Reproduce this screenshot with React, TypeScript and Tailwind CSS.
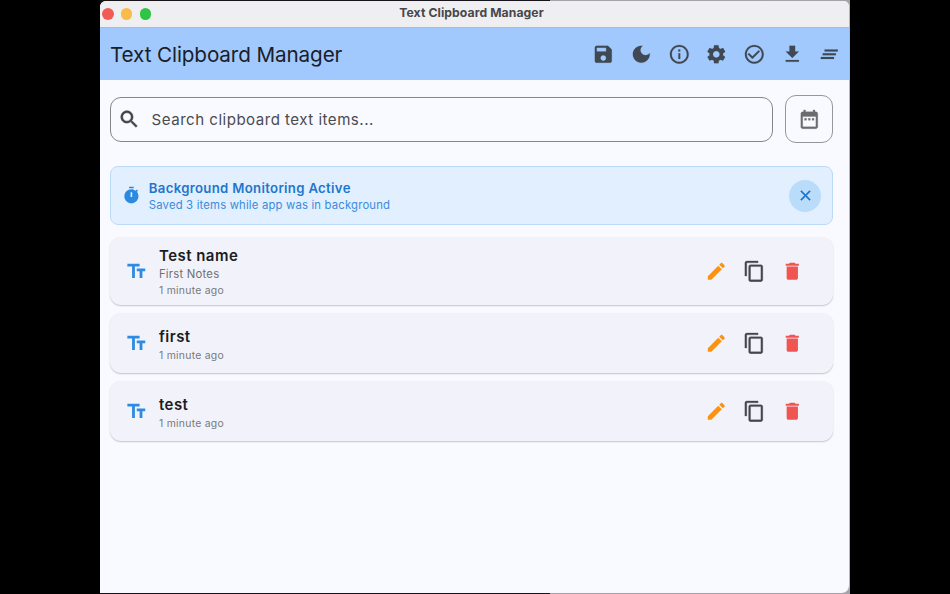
const ICONS = {
  save: "M17 3H5c-1.11 0-2 .9-2 2v14c0 1.1.89 2 2 2h14c1.1 0 2-.9 2-2V7l-4-4zm-5 16c-1.66 0-3-1.34-3-3s1.34-3 3-3 3 1.34 3 3-1.34 3-3 3zm3-10H5V5h10v4z",
  moon: "M12 3c-4.97 0-9 4.03-9 9s4.03 9 9 9 9-4.03 9-9c0-.46-.04-.92-.1-1.36-.98 1.37-2.58 2.26-4.4 2.26-2.98 0-5.4-2.42-5.4-5.4 0-1.81.89-3.42 2.26-4.4-.44-.06-.9-.1-1.36-.1z",
  info: "M11 7h2v2h-2zm0 4h2v6h-2zm1-9C6.48 2 2 6.48 2 12s4.48 10 10 10 10-4.48 10-10S17.52 2 12 2zm0 18c-4.41 0-8-3.59-8-8s3.59-8 8-8 8 3.59 8 8-3.59 8-8 8z",
  settings:
    "M19.14 12.94c.04-.3.06-.61.06-.94 0-.32-.02-.64-.07-.94l2.03-1.58c.18-.14.23-.41.12-.61l-1.92-3.32c-.12-.22-.37-.29-.59-.22l-2.39.96c-.5-.38-1.03-.7-1.62-.94l-.36-2.54c-.04-.24-.24-.41-.48-.41h-3.84c-.24 0-.43.17-.47.41l-.36 2.54c-.59.24-1.13.57-1.62.94l-2.39-.96c-.22-.08-.47 0-.59.22L2.74 8.87c-.12.21-.08.47.12.61l2.03 1.58c-.05.3-.09.63-.09.94s.02.64.07.94l-2.03 1.58c-.18.14-.23.41-.12.61l1.92 3.32c.12.22.37.29.59.22l2.39-.96c.5.38 1.03.7 1.62.94l.36 2.54c.05.24.24.41.48.41h3.84c.24 0 .44-.17.47-.41l.36-2.54c.59-.24 1.13-.56 1.62-.94l2.39.96c.22.08.47 0 .59-.22l1.92-3.32c.12-.22.07-.47-.12-.61l-2.01-1.58zM12 15.6c-1.98 0-3.6-1.62-3.6-3.6s1.62-3.6 3.6-3.6 3.6 1.62 3.6 3.6-1.62 3.6-3.6 3.6z",
  check: "M16.59 7.58L10 14.17l-3.59-3.58L5 12l5 5 8-8zM12 2C6.48 2 2 6.48 2 12s4.48 10 10 10 10-4.48 10-10S17.52 2 12 2zm0 18c-4.42 0-8-3.58-8-8s3.58-8 8-8 8 3.58 8 8-3.58 8-8 8z",
  download: "M5 20h14v-2H5v2zM19 9h-4V3H9v6H5l7 7 7-7z",
  clearAll: "M5 13h14v-2H5v2zm-2 4h14v-2H3v2zM7 7v2h14V7H7z",
  search:
    "M15.5 14h-.79l-.28-.27C15.41 12.59 16 11.11 16 9.5 16 5.91 13.09 3 9.5 3S3 5.91 3 9.5 5.91 16 9.5 16c1.61 0 3.09-.59 4.23-1.57l.27.28v.79l5 4.99L20.49 19l-4.99-5zm-6 0C7.01 14 5 11.99 5 9.5S7.01 5 9.5 5 14 7.01 14 9.5 11.99 14 9.5 14z",
  calendar:
    "M9 11H7v2h2v-2zm4 0h-2v2h2v-2zm4 0h-2v2h2v-2zm2-7h-1V2h-2v2H8V2H6v2H5c-1.11 0-1.99.9-1.99 2L3 20c0 1.1.89 2 2 2h14c1.1 0 2-.9 2-2V6c0-1.1-.9-2-2-2zm0 16H5V9h14v11z",
  timer:
    "M9 1h6v2H9zM19.03 7.39l1.42-1.42c-.43-.51-.9-.99-1.41-1.41l-1.42 1.42C16.07 4.74 14.12 4 12 4c-4.97 0-9 4.03-9 9s4.02 9 9 9 9-4.03 9-9c0-2.12-.74-4.07-1.97-5.61zM13 14h-2V8h2v6z",
  close: "M19 6.41L17.59 5 12 10.59 6.41 5 5 6.41 10.59 12 5 17.59 6.41 19 12 13.41 17.59 19 19 17.59 13.41 12z",
  text: "M2.5 4v3h5v12h3V7h5V4h-13zm19 5h-9v3h3v7h3v-7h3V9z",
  edit: "M3 17.25V21h3.75L17.81 9.94l-3.75-3.75L3 17.25zM20.71 7.04c.39-.39.39-1.02 0-1.41l-2.34-2.34c-.39-.39-1.02-.39-1.41 0l-1.83 1.83 3.75 3.75 1.83-1.83z",
  copy: "M16 1H4c-1.1 0-2 .9-2 2v14h2V3h12V1zm3 4H8c-1.1 0-2 .9-2 2v14c0 1.1.9 2 2 2h11c1.1 0 2-.9 2-2V7c0-1.1-.9-2-2-2zm0 16H8V7h11v14z",
  trash: "M6 19c0 1.1.9 2 2 2h8c1.1 0 2-.9 2-2V7H6v12zM19 4h-3.5l-1-1h-5l-1 1H5v2h14V4z",
};

type IconName = keyof typeof ICONS;

function Icon({ name, weight = 0, className = "size-[22.6px]" }: { name: IconName; weight?: number; className?: string }) {
  return (
    <svg
      viewBox="0 0 24 24"
      fill="currentColor"
      stroke={weight ? "currentColor" : "none"}
      strokeWidth={weight}
      strokeLinejoin="round"
      className={`shrink-0 ${className}`}
    >
      <path d={ICONS[name]} />
    </svg>
  );
}

const TOOLBAR: IconName[] = ["save", "moon", "info", "settings", "check", "download", "clearAll"];

interface Clip {
  title: string;
  note?: string;
  time: string;
}

const CLIPS: Clip[] = [
  { title: "Test name", note: "First Notes", time: "1 minute ago" },
  { title: "first", time: "1 minute ago" },
  { title: "test", time: "1 minute ago" },
];

function ClipCard({ clip }: { clip: Clip }) {
  return (
    <div
      className={`flex items-center rounded-[11px] bg-[#f2f3fa] pl-[15px] pr-[30px] shadow-[0_1px_1.5px_rgba(0,0,0,0.22)] ${
        clip.note ? "h-[68px]" : "h-[60px]"
      }`}
    >
      <Icon name="text" className="size-[22.6px] text-[#2f8ae0]" />
      <div className={`ml-[11.4px] flex-1 whitespace-nowrap ${clip.note ? "pt-px" : "pt-[3px]"}`}>
        <div className="text-[15px] font-semibold leading-[21px] tracking-[0.46px] text-[#1b1c21]">{clip.title}</div>
        {clip.note && (
          <div className="text-[11.3px] leading-[17px] tracking-[0.22px] text-[#6f7074]">{clip.note}</div>
        )}
        <div
          className={`text-[10.4px] tracking-[0.27px] text-[#77787c] ${clip.note ? "leading-[15px]" : "leading-[17px]"}`}
        >
          {clip.time}
        </div>
      </div>
      <div className="flex items-center gap-[15.1px]">
        <Icon name="edit" className="size-[22.6px] text-[#fb9210]" />
        <Icon name="copy" weight={0.3} className="size-[22.6px] text-[#43464d]" />
        <Icon name="trash" className="size-[22.6px] text-[#f05552]" />
      </div>
    </div>
  );
}

export default function App() {
  return (
    <div className="flex h-[594px] w-[950px] overflow-hidden bg-black font-['Inter','Liberation_Sans',sans-serif]">
      <div className="ml-[99.5px] h-[594px] w-[750px] bg-linear-to-r from-[#17131b] from-60% to-[#a5a3a9] to-60% pt-px">
        <div className="flex h-[592px] flex-col overflow-hidden rounded-t-[6px] rounded-br-[8px] border-r border-[#b5b6bd] bg-[#f9faff]">
          <div className="relative flex h-[27px] shrink-0 items-center border-b border-[#abb8d8] bg-[#efeef0] pl-[2.7px]">
            <div className="flex gap-[7.3px]">
              <span className="size-[11.5px] rounded-full bg-[#f15a55]" />
              <span className="size-[11.5px] rounded-full bg-[#f9bb4a]" />
              <span className="size-[11.5px] rounded-full bg-[#2fc446]" />
            </div>
            <div className="absolute inset-x-0 top-[3px] pr-[5px] text-center text-[12.2px] font-bold leading-[17px] tracking-[0.08px] text-[#48474b]">
              Text Clipboard Manager
            </div>
          </div>

          <header className="flex h-[52px] shrink-0 items-center justify-between bg-[#a1c9fd] pl-[10.5px] pr-[7.5px] text-[#3f4853]">
            <h1 className="whitespace-nowrap pt-px text-[20.7px] leading-[28px] tracking-[-0.12px] text-[#192029]">
              Text Clipboard Manager
            </h1>
            <div className="flex gap-[15.1px]">
              {TOOLBAR.map((name) => (
                <Icon key={name} name={name} weight={0.15} />
              ))}
            </div>
          </header>

          <main className="flex flex-col pl-[10.5px] pr-[15.4px] pt-[15px]">
            <div className="flex items-center gap-[12px]">
              <div className="flex h-[45px] flex-1 items-center rounded-[11px] border border-[#85868b] pl-[6.5px] text-[#414348]">
                <Icon name="search" weight={0.6} />
                <span className="ml-[11.5px] whitespace-nowrap pt-[2px] text-[15.1px] leading-[22px] tracking-[0.48px] text-[#4a4b51]">
                  Search clipboard text items...
                </span>
              </div>
              <button className="flex size-[48px] items-center justify-center rounded-[11px] border border-[#97979b] text-[#6c6c6f]">
                <Icon name="calendar" weight={0.3} />
              </button>
            </div>

            <section className="mt-[23px] flex h-[59px] items-center rounded-[8px] border border-[#b9dbf8] bg-[#e1efff] pl-[11px] pr-[11px]">
              <Icon name="timer" className="size-[18.8px] text-[#2b8ae0]" />
              <div className="ml-[8px] flex-1 whitespace-nowrap pt-px">
                <div className="text-[13.2px] font-semibold leading-[18px] tracking-[0.31px] text-[#1f76cd]">
                  Background Monitoring Active
                </div>
                <div className="text-[11.3px] leading-[17px] tracking-[0.18px] text-[#3a8cdb]">
                  Saved 3 items while app was in background
                </div>
              </div>
              <button className="flex size-[32px] items-center justify-center rounded-full bg-[#badcfb] text-[#1d75cf]">
                <Icon name="close" weight={0.6} className="size-[17px]" />
              </button>
            </section>

            <div className="mt-[12px] flex flex-col gap-[8px]">
              {CLIPS.map((clip) => (
                <ClipCard key={clip.title} clip={clip} />
              ))}
            </div>
          </main>
        </div>
      </div>
    </div>
  );
}
